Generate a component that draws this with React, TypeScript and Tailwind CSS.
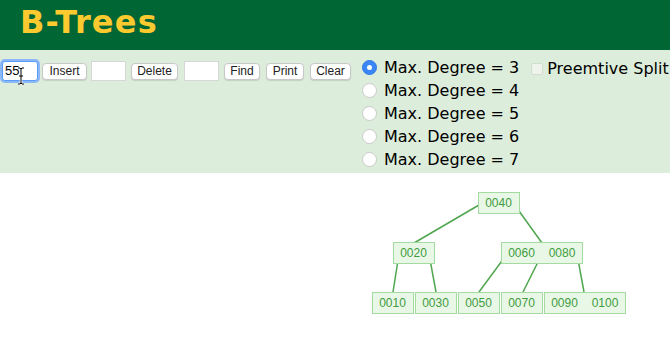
import React from 'react';

const verdana = { fontFamily: '"DejaVu Sans", Verdana, sans-serif' };

const Btn = ({ label, className = '' }: { label: string; className?: string }) => (
  <button
    className={`h-[17px] px-0 flex items-center justify-center rounded-[4px] bg-white border border-[#c8c8c8] shadow-[0_1px_1px_rgba(0,0,0,0.12)] text-[12px] leading-none text-[#222] font-['Liberation_Sans',Arial,sans-serif] ${className}`}
  >
    {label}
  </button>
);

const Field = ({ value = '', focused = false, className = '' }: { value?: string; focused?: boolean; className?: string }) => (
  <div
    className={`h-[20px] bg-white border flex items-center px-[2px] text-[13px] font-['Liberation_Sans',Arial,sans-serif] text-black ${
      focused ? 'border-[#5a9cf5] ring-[2px] ring-[#8db8f8] rounded-[3px]' : 'border-[#d6d6d6]'
    } ${className}`}
  >
    {value}
  </div>
);

const Radio = ({ checked }: { checked?: boolean }) => (
  <span
    className={`w-[15px] h-[15px] rounded-full flex items-center justify-center shrink-0 ${
      checked ? 'bg-[#3a86f7] border border-[#2f77e6]' : 'bg-white border border-[#c9c9c9]'
    }`}
  >
    {checked && <span className="w-[5px] h-[5px] rounded-full bg-white" />}
  </span>
);

type Node = { x: number; y: number; keys: string[] };

const nodes: Node[] = [
  { x: 478, y: 19, keys: ['0040'] },
  { x: 393, y: 69, keys: ['0020'] },
  { x: 501, y: 69, keys: ['0060', '0080'] },
  { x: 372, y: 119, keys: ['0010'] },
  { x: 415, y: 119, keys: ['0030'] },
  { x: 458, y: 119, keys: ['0050'] },
  { x: 501, y: 119, keys: ['0070'] },
  { x: 544, y: 119, keys: ['0090', '0100'] },
];

const edges = [
  [479, 32, 414, 70],
  [514, 31, 542, 70],
  [399, 81, 393, 119],
  [429, 81, 436, 119],
  [507, 81, 479, 119],
  [542, 81, 523, 119],
  [577, 81, 584, 119],
];

const Tree = () => (
  <svg width={670} height={172} className="block">
    {edges.map(([x1, y1, x2, y2], i) => (
      <line key={i} x1={x1} y1={y1} x2={x2} y2={y2} stroke="#4fa64f" strokeWidth={1.5} />
    ))}
    {nodes.map((n, i) => {
      const w = 41 * n.keys.length - (n.keys.length - 1);
      return (
        <g key={i}>
          <rect x={n.x + 0.5} y={n.y + 0.5} width={w} height={21} fill="#e9f7e7" stroke="#a3dba1" />
          {n.keys.map((k, j) => (
            <text
              key={k}
              x={n.x + 20.5 + j * 40.5}
              y={n.y + 15}
              textAnchor="middle"
              fontSize={12}
              fill="#3f9c3f"
              fontFamily='"Liberation Sans", Arial, sans-serif'
            >
              {k}
            </text>
          ))}
        </g>
      );
    })}
  </svg>
);

export default function App() {
  const degrees = [3, 4, 5, 6, 7];
  return (
    <div className="w-[670px] h-[345px] bg-white overflow-hidden">
      <header className="h-[50px] bg-[#006633] pl-[20px] pt-[2px]">
        <h1 className="text-[32px] leading-[40px] tracking-[1.2px] font-bold text-[#fcca2f]" style={verdana}>
          B-Trees
        </h1>
      </header>
      <div className="h-[123px] bg-[#ddeddb] flex items-start pt-[10px]">
        <div className="flex items-center pl-[2px] pt-[1px]">
          <div className="relative">
            <Field value="55" focused className="w-[36px]" />
            <svg className="absolute left-[15px] top-[6px]" width="8" height="18" viewBox="0 0 8 18">
              <path d="M1 1h2l1 1 1-1h2M4 2v14M1 17h2l1-1 1 1h2M2 9h4" stroke="#fff" strokeWidth="2.5" fill="none" />
              <path d="M1 1h2l1 1 1-1h2M4 2v14M1 17h2l1-1 1 1h2M2 9h4" stroke="#000" strokeWidth="1" fill="none" />
            </svg>
          </div>
          <Btn label="Insert" className="ml-[4px] w-[45px]" />
          <Field className="ml-[4px] w-[35px]" />
          <Btn label="Delete" className="ml-[5px] w-[47px]" />
          <Field className="ml-[6px] w-[35px]" />
          <Btn label="Find" className="ml-[5px] w-[36px]" />
          <Btn label="Print" className="ml-[6px] w-[38px]" />
          <Btn label="Clear" className="ml-[6px] w-[41px]" />
        </div>
        <div className="ml-[11px] flex flex-col -mt-[4px]">
          {degrees.map((d) => (
            <label key={d} className="flex items-center h-[23px] text-[16px] text-black" style={verdana}>
              <Radio checked={d === 3} />
              <span className="ml-[7px]">Max. Degree = {d}</span>
            </label>
          ))}
        </div>
        <label className="ml-[12px] flex items-center h-[23px] -mt-[3px] text-[16px] text-black" style={verdana}>
          <span className="w-[12px] h-[12px] rounded-[2px] bg-[#eef3ec] border border-[#d2dccf]" />
          <span className="ml-[4px] whitespace-nowrap">Preemtive Split</span>
        </label>
      </div>
      <Tree />
    </div>
  );
}
